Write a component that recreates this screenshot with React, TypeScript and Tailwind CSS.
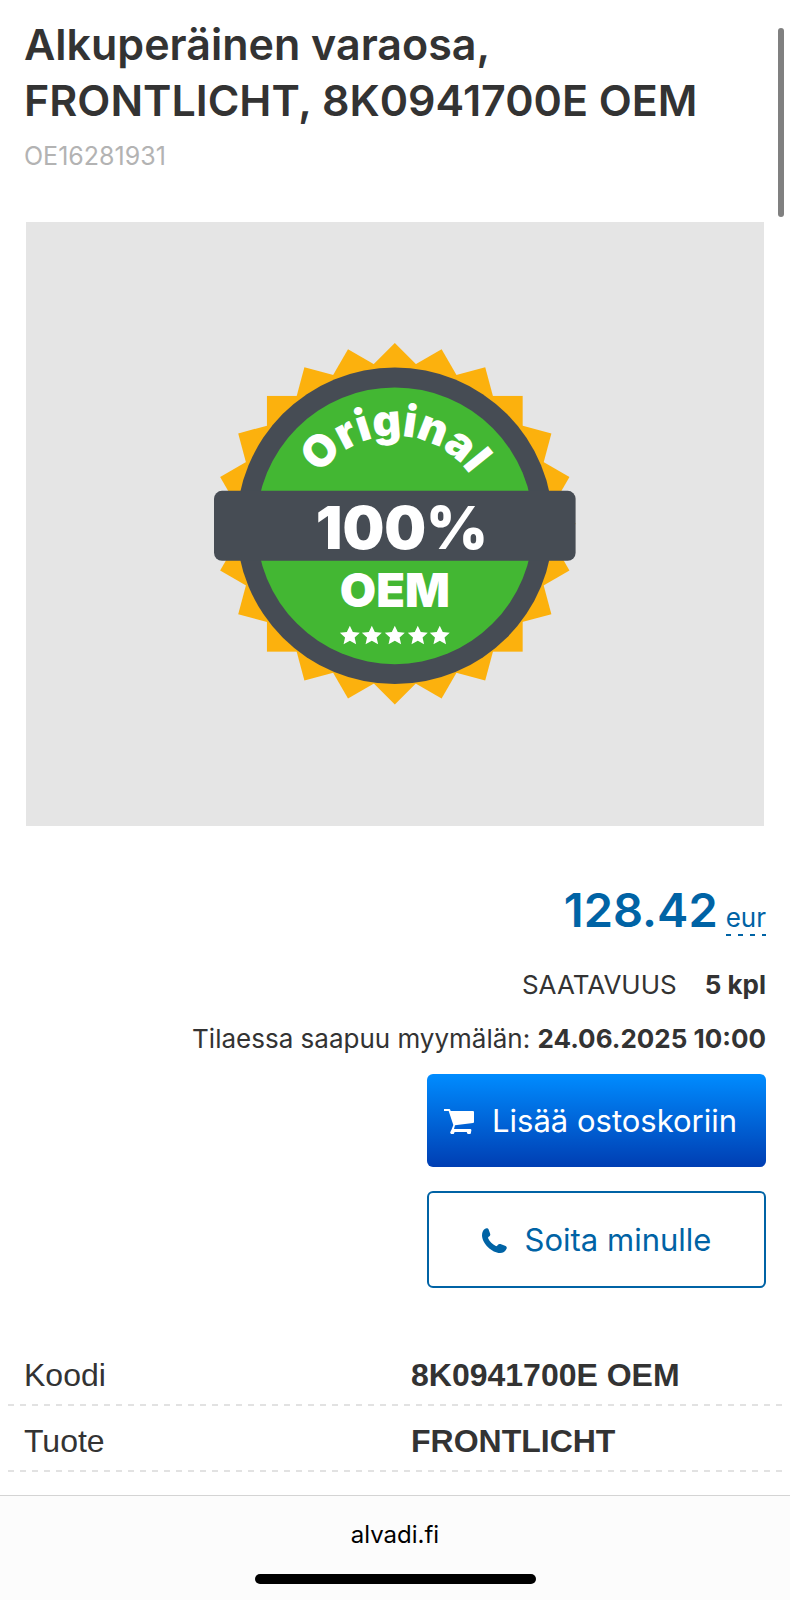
import React from 'react';

interface Spec {
  label: string;
  value: string;
}

const specs: Spec[] = [
  { label: 'Koodi', value: '8K0941700E OEM' },
  { label: 'Tuote', value: 'FRONTLICHT' },
];

const RAY_ANGLES = [0, 15, 30, 45, 60, 75];
const STAR_CENTERS = [-45, -23, 0, 23, 45];

const OemBadge: React.FC = () => (
  <svg viewBox="0 0 362 364" className="w-[49%]" role="img" aria-label="Original 100% OEM">
    <defs>
      <path id="badge-arc" d="M 89 186 A 92 92 0 0 1 273 186" />
      <path id="badge-star" d="M0 -10 L3 -3.6 L10 -2.9 L4.8 1.9 L6.3 8.6 L0 5.2 L-6.3 8.6 L-4.8 1.9 L-10 -2.9 L-3 -3.6 Z" />
    </defs>
    {RAY_ANGLES.map((angle) => (
      <rect
        key={angle}
        x="53"
        y="54"
        width="256"
        height="256"
        fill="#fcb10d"
        transform={`rotate(${angle} 181 182)`}
      />
    ))}
    <circle cx="181" cy="184" r="158.5" fill="#464c54" />
    <circle cx="181" cy="184" r="138.5" fill="#43b733" />
    <rect x="0" y="149" width="362" height="70" rx="8" fill="#464c54" />
    <g fill="#ffffff" fontFamily="Inter, sans-serif" fontWeight="900" textAnchor="middle">
      <text fontSize="44">
        <textPath href="#badge-arc" startOffset="50%">Original</textPath>
      </text>
      <text x="188" y="207" fontSize="59">100%</text>
      <text x="181" y="265" fontSize="47">OEM</text>
    </g>
    {STAR_CENTERS.map((x) => (
      <use key={x} href="#badge-star" x={181 + x} y="294" fill="#ffffff" />
    ))}
  </svg>
);

const CartIcon: React.FC = () => (
  <svg viewBox="0 0 90 76" className="w-[30px]" fill="currentColor" aria-hidden="true">
    <path d="M0 0h16q2 0 3 3l1 3h67q3 0 3 3v30q0 3-3 3l-54 7-3 11h49q3 0 3 3v3q0 3-3 3H23q-3 0-2-3l7-18L14 6H0z" />
    <circle cx="25" cy="70" r="6" />
    <circle cx="75" cy="70" r="6" />
  </svg>
);

const PhoneIcon: React.FC = () => (
  <svg viewBox="0 0 76 76" className="w-[25px]" fill="currentColor" aria-hidden="true">
    <path d="M3 9C7 2 12 0 16 1c3 1 4 3 5 6l4 11c1 4-1 6-4 8-2 2-3 3-2 6 4 9 13 18 23 23 3 1 4 0 6-3 2-3 5-4 8-3l14 5c5 2 6 5 5 8-4 9-11 14-20 14C31 76 0 47 0 22c0-5 1-9 3-13z" />
  </svg>
);

export default function App() {
  return (
    <div className="relative flex min-h-screen flex-col bg-white font-[Inter,sans-serif] text-[#333333]">
      <div className="absolute top-7 right-[6px] h-[189px] w-[6px] rounded-full bg-[#808080]" />

      <main className="flex-1">
        <header className="px-6 pt-4">
          <h1 className="text-[43px] leading-14 font-semibold">
            Alkuperäinen varaosa,
            <br />
            FRONTLICHT, 8K0941700E OEM
          </h1>
          <p className="mt-2 text-[25px] leading-10 text-[#b3b3b3]">OE16281931</p>
        </header>

        <figure className="mx-[26px] mt-[46px] flex aspect-[738/604] items-center justify-center bg-[#e5e5e5]">
          <OemBadge />
        </figure>

        {/* Price and availability */}
        <section className="mt-14 flex flex-col items-end px-6">
          <p className="flex items-baseline gap-2 text-[#0063a5]">
            <span className="text-[47px] leading-14 font-semibold">128.42</span>
            <button
              type="button"
              className="bg-[repeating-linear-gradient(90deg,#0063a5_0_5px,transparent_5px_12px)] bg-[length:100%_2px] bg-bottom bg-no-repeat pb-[2px] text-[26px] leading-8"
            >
              eur
            </button>
          </p>
          <p className="mt-5 flex gap-7 text-[26px] leading-[54px]">
            <span>SAATAVUUS</span>
            <strong className="font-bold">5 kpl</strong>
          </p>
          <p className="text-[26px] leading-[54px]">
            Tilaessa saapuu myymälän: <strong className="font-bold">24.06.2025 10:00</strong>
          </p>

          <div className="mt-2 flex w-[339px] flex-col gap-6 text-[31px]">
            <button
              type="button"
              className="flex h-[93px] items-center gap-[18px] rounded-md bg-linear-to-b from-[#008cff] to-[#003eb3] pt-[2px] pl-[17px] text-white"
            >
              <CartIcon />
              Lisää ostoskoriin
            </button>
            <button
              type="button"
              className="flex h-[97px] items-center justify-center gap-[18px] rounded-md border-2 border-[#0063a5] pt-[2px] text-[#0063a5]"
            >
              <PhoneIcon />
              Soita minulle
            </button>
          </div>
        </section>

        <div className="mt-[52px] px-2">
          <table className="w-full border-collapse text-left font-['Liberation_Sans',sans-serif] text-[32px] leading-[62px]">
            <tbody>
              {specs.map((spec) => (
                <tr
                  key={spec.label}
                  className="bg-[repeating-linear-gradient(90deg,#e2e2e2_0_6px,transparent_6px_12px)] bg-[length:100%_2px] bg-bottom bg-no-repeat"
                >
                  <th scope="row" className="w-1/2 pt-1 pl-4 font-normal">
                    {spec.label}
                  </th>
                  <td className="pt-1 pl-4 font-bold">{spec.value}</td>
                </tr>
              ))}
            </tbody>
          </table>
        </div>
      </main>

      <footer className="flex flex-col items-center border-t border-[#d4d4d4] bg-[#fcfcfc] pt-5 pb-4 text-black">
        <a href="https://alvadi.fi" className="text-2xl leading-[38px]">
          alvadi.fi
        </a>
        <div className="mt-5 h-[10px] w-[281px] rounded-full bg-black" />
      </footer>
    </div>
  );
}
